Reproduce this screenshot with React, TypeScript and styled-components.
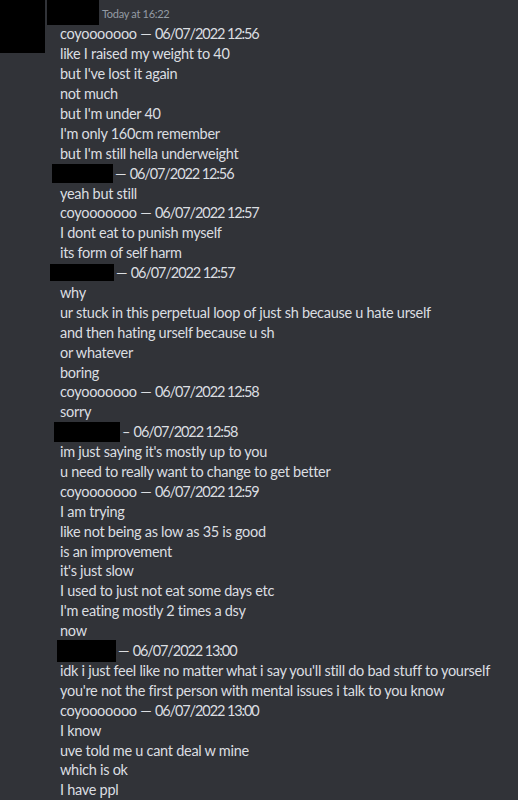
import React from 'react';
import styled, { createGlobalStyle } from 'styled-components';

const GlobalStyle = createGlobalStyle`
  html, body {
    margin: 0;
    padding: 0;
    background: #313338;
    overflow: hidden;
  }
`;

const Chat = styled.div`
  display: grid;
  grid-template-columns: 45px 1fr;
  column-gap: 2px;
  width: 518px;
  height: 800px;
  background: #313338;
  font-family: Lato, 'Noto Sans', sans-serif;
  color: #dbdee1;
`;

const Avatar = styled.div`
  grid-row: 1 / span 2;
  width: 45px;
  height: 53px;
  background: #000;
`;

const Body = styled.div`
  grid-column: 2;
  grid-row: 1 / span 2;
  display: flex;
  flex-direction: column;
`;

const Header = styled.div`
  display: flex;
  align-items: flex-start;
  height: 24px;
`;

const NameBox = styled.div`
  width: 52px;
  height: 25px;
  background: #000;
  flex-shrink: 0;
`;

const Stamp = styled.span`
  margin: 7px 0 0 3px;
  font-size: 11px;
  line-height: 14px;
  letter-spacing: -0.3px;
  color: #949ba4;
`;

const Line = styled.div`
  display: flex;
  align-items: center;
  height: 19.9px;
  padding-left: 13px;
  font-size: 14.5px;
  letter-spacing: -0.28px;
  white-space: nowrap;
`;

const RedactedLine = styled(Line)<{ $offset: number }>`
  padding-left: ${(p) => p.$offset}px;
`;

const Redact = styled.span<{ $w: number; $h: number }>`
  display: inline-block;
  width: ${(p) => p.$w}px;
  height: ${(p) => p.$h}px;
  background: #000;
  margin-right: 2px;
  flex-shrink: 0;
`;

const When = styled.span`
  letter-spacing: -1.1px;
  white-space: pre;
`;

type Item =
  | { kind: 'text'; text: string }
  | { kind: 'head'; name: string; time: string }
  | { kind: 'redacted'; offset: number; w: number; h: number; dash: string; time: string };

const t = (text: string): Item => ({ kind: 'text', text });
const h = (time: string): Item => ({ kind: 'head', name: 'coyooooooo', time });
const r = (offset: number, w: number, hh: number, time: string, dash = '—'): Item => ({
  kind: 'redacted',
  offset,
  w,
  h: hh,
  dash,
  time,
});

const items: Item[] = [
  h('06/07/2022 12:56'),
  t('like I raised my weight to 40'),
  t("but I've lost it again"),
  t('not much'),
  t("but I'm under 40"),
  t("I'm only 160cm remember"),
  t("but I'm still hella underweight"),
  r(5, 61, 19, '06/07/2022 12:56'),
  t('yeah but still'),
  h('06/07/2022 12:57'),
  t('I dont eat to punish myself'),
  t('its form of self harm'),
  r(3, 64, 17, '06/07/2022 12:57'),
  t('why'),
  t('ur stuck in this perpetual loop of just sh because u hate urself'),
  t('and then hating urself because u sh'),
  t('or whatever'),
  t('boring'),
  h('06/07/2022 12:58'),
  t('sorry'),
  r(7, 66, 20, '06/07/2022 12:58', '–'),
  t("im just saying it's mostly up to you"),
  t('u need to really want to change to get better'),
  h('06/07/2022 12:59'),
  t('I am trying'),
  t('like not being as low as 35 is good'),
  t('is an improvement'),
  t("it's just slow"),
  t('I used to just not eat some days etc'),
  t("I'm eating mostly 2 times a dsy"),
  t('now'),
  r(10, 59, 22, '06/07/2022 13:00'),
  t("idk i just feel like no matter what i say you'll still do bad stuff to yourself"),
  t("you're not the first person with mental issues i talk to you know"),
  h('06/07/2022 13:00'),
  t('I know'),
  t('uve told me u cant deal w mine'),
  t('which is ok'),
  t('I have ppl'),
];

export default function App() {
  return (
    <>
      <GlobalStyle />
      <Chat>
        <Avatar />
        <Body>
          <Header>
            <NameBox />
            <Stamp>Today at 16:22</Stamp>
          </Header>
          {items.map((it, i) => {
            if (it.kind === 'text') return <Line key={i}>{it.text}</Line>;
            if (it.kind === 'head')
              return (
                <Line key={i}>
                  {it.name} —&nbsp;<When>{it.time}</When>
                </Line>
              );
            return (
              <RedactedLine key={i} $offset={it.offset}>
                <Redact $w={it.w} $h={it.h} />
                {it.dash}&nbsp;<When>{it.time}</When>
              </RedactedLine>
            );
          })}
        </Body>
      </Chat>
    </>
  );
}
